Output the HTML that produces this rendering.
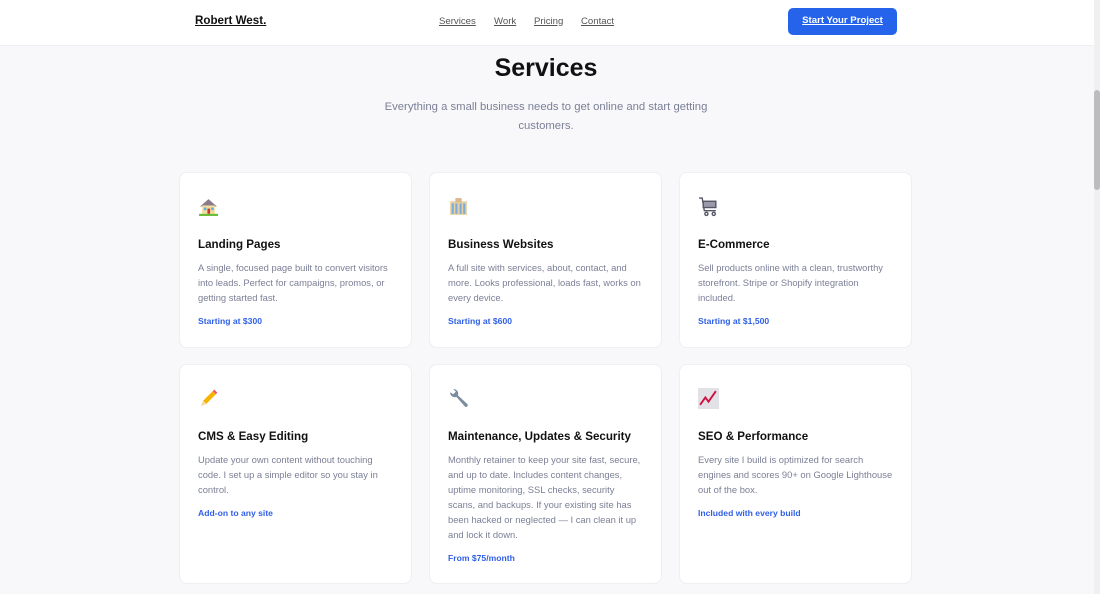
<!DOCTYPE html>
<html><head><meta charset="utf-8"><style>
*{margin:0;padding:0;box-sizing:border-box}
body{width:1100px;height:594px;overflow:hidden;background:#f8f8fb;font-family:"Liberation Sans",sans-serif;position:relative}
header{position:absolute;left:0;top:0;width:1094px;height:46px;background:#fff;border-bottom:1px solid #eeeef3}
.logo{position:absolute;left:195px;top:14px;font-size:11.6px;font-weight:bold;color:#111;text-decoration:underline;text-decoration-thickness:1px}
nav a{position:absolute;top:15.5px;font-size:9.6px;color:#555;text-decoration:underline}
.btn{position:absolute;left:788px;top:8px;width:109px;height:27px;background:#2563eb;border-radius:5px;color:#fff;font-size:9.6px;font-weight:bold;text-decoration:underline;text-align:center;line-height:26px}
h1{position:absolute;left:0;width:1092px;top:54px;text-align:center;font-size:25px;color:#111}
.sub{position:absolute;left:376px;width:340px;top:98px;text-align:center;font-size:11.3px;line-height:19px;color:#7b7f96}
.card{position:absolute;width:233px;background:#fff;border:1px solid #eeeef3;border-radius:8px;padding:23px 12px 20px 18px}
.card .ic{height:21px;width:21px;display:block}
.card h3{margin-top:20px;font-size:11.6px;line-height:16px;color:#111;white-space:nowrap}
.card p{margin-top:7px;font-size:9.4px;line-height:15px;color:#7b7f96;white-space:nowrap}
.card .pr{margin-top:9px;font-size:8.6px;line-height:14px;font-weight:bold;color:#2f5fe8}
.sb{position:absolute;left:1094px;top:0;width:6px;height:594px;background:#f0f0f0}
.sb div{position:absolute;top:90px;width:6px;height:100px;background:#bdbdbd;border-radius:3px}
</style></head><body>
<header>
<div class="logo">Robert West.</div>
<nav><a style="left:439px">Services</a><a style="left:494px">Work</a><a style="left:534px">Pricing</a><a style="left:581px">Contact</a></nav>
<div class="btn">Start Your Project</div>
</header>
<h1>Services</h1>
<div class="sub">Everything a small business needs to get online and start getting customers.</div>

<div class="card" style="left:179px;top:172px;height:176px">
<svg class="ic" viewBox="0 0 20 20"><path d="M2 10 L10 3 L18 10 Z" fill="#8a7a8a"/><rect x="4" y="9" width="12" height="8" fill="#f5dc9a"/><rect x="9" y="12" width="2.5" height="5" fill="#c33"/><rect x="5.5" y="11" width="2.5" height="2.5" fill="#5ab0e8"/><rect x="12.5" y="11" width="2.5" height="2.5" fill="#5ab0e8"/><rect x="1" y="17" width="18" height="2" fill="#6b3"/></svg>
<h3>Landing Pages</h3>
<p>A single, focused page built to convert visitors<br>into leads. Perfect for campaigns, promos, or<br>getting started fast.</p>
<div class="pr">Starting at $300</div></div>

<div class="card" style="left:429px;top:172px;height:176px">
<svg class="ic" viewBox="0 0 20 20"><rect x="2" y="5" width="16" height="13" fill="#e9cfa8"/><rect x="7" y="2" width="6" height="4" fill="#d9b88a"/><g fill="#7aaed6"><rect x="3.5" y="7" width="2" height="10"/><rect x="7" y="7" width="2" height="10"/><rect x="11" y="7" width="2" height="10"/><rect x="14.5" y="7" width="2" height="10"/></g></svg>
<h3>Business Websites</h3>
<p>A full site with services, about, contact, and<br>more. Looks professional, loads fast, works on<br>every device.</p>
<div class="pr">Starting at $600</div></div>

<div class="card" style="left:679px;top:172px;height:176px">
<svg class="ic" viewBox="0 0 20 20" fill="none" stroke="#556" stroke-width="1.3"><path d="M1 2 H4 L6 14 H17"/><rect x="5" y="5" width="12" height="6" fill="#99a"/><circle cx="8" cy="17" r="1.5"/><circle cx="15" cy="17" r="1.5"/></svg>
<h3>E-Commerce</h3>
<p>Sell products online with a clean, trustworthy<br>storefront. Stripe or Shopify integration<br>included.</p>
<div class="pr">Starting at $1,500</div></div>

<div class="card" style="left:179px;top:364px;height:220px">
<svg class="ic" viewBox="0 0 20 20"><path d="M3 17 L5 12 L14 3 L17 6 L8 15 Z" fill="#f4b400"/><path d="M14 3 L17 6 L18.5 4.5 L15.5 1.5 Z" fill="#e57"/><path d="M3 17 L5 12 L8 15 Z" fill="#f3d9a5"/></svg>
<h3>CMS &amp; Easy Editing</h3>
<p>Update your own content without touching<br>code. I set up a simple editor so you stay in<br>control.</p>
<div class="pr">Add-on to any site</div></div>

<div class="card" style="left:429px;top:364px;height:220px">
<svg class="ic" viewBox="0 0 20 20"><path d="M2 4 a4.5 4.5 0 0 0 6 4.5 L16 17.5 a1.6 1.6 0 0 0 2.3 -2.3 L9.5 7 a4.5 4.5 0 0 0 -4.5 -6 L7.5 3.5 L5 6 Z" fill="#7a8c9e"/></svg>
<h3>Maintenance, Updates &amp; Security</h3>
<p>Monthly retainer to keep your site fast, secure,<br>and up to date. Includes content changes,<br>uptime monitoring, SSL checks, security<br>scans, and backups. If your existing site has<br>been hacked or neglected — I can clean it up<br>and lock it down.</p>
<div class="pr">From $75/month</div></div>

<div class="card" style="left:679px;top:364px;height:220px">
<svg class="ic" viewBox="0 0 20 20"><rect x="0" y="0" width="20" height="20" fill="#e2e2e6"/><path d="M2 16 L7 9 L10 13 L17 3" fill="none" stroke="#d01040" stroke-width="1.8"/></svg>
<h3>SEO &amp; Performance</h3>
<p>Every site I build is optimized for search<br>engines and scores 90+ on Google Lighthouse<br>out of the box.</p>
<div class="pr">Included with every build</div></div>

<div class="sb"><div></div></div>
</body></html>
